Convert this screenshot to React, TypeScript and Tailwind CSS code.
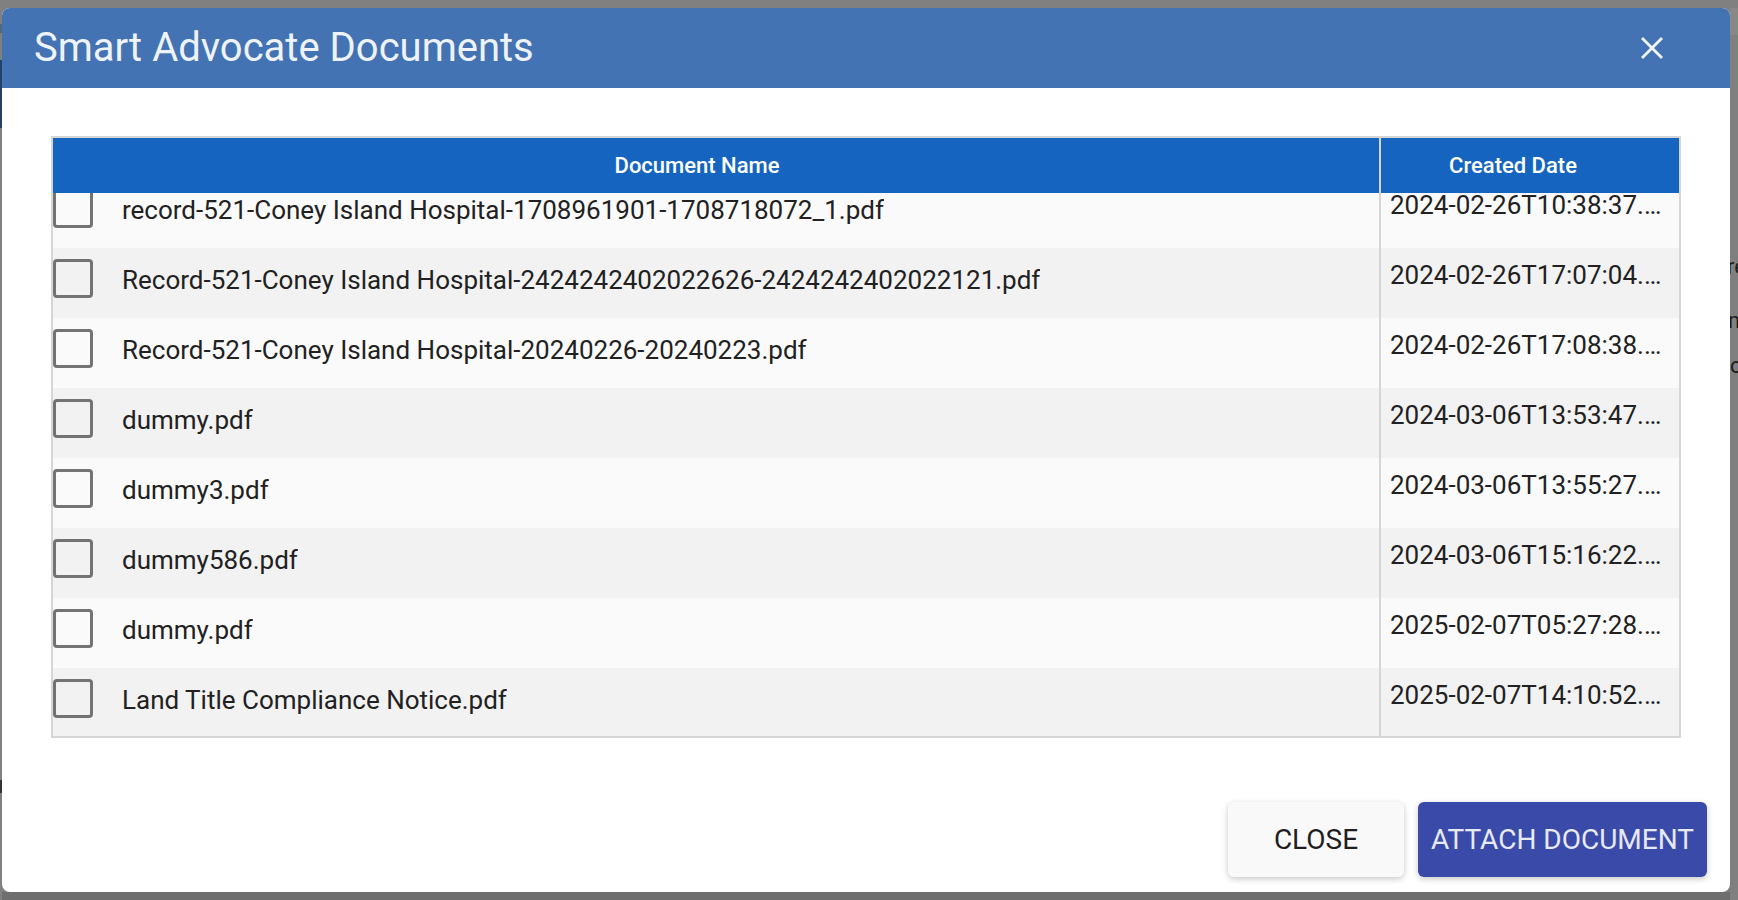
import React from 'react';

type Doc = { name: string; created: string };

const docs: Doc[] = [
  { name: 'record-521-Coney Island Hospital-1708961901-1708718072_1.pdf', created: '2024-02-26T10:38:37.…' },
  { name: 'Record-521-Coney Island Hospital-2424242402022626-2424242402022121.pdf', created: '2024-02-26T17:07:04.…' },
  { name: 'Record-521-Coney Island Hospital-20240226-20240223.pdf', created: '2024-02-26T17:08:38.…' },
  { name: 'dummy.pdf', created: '2024-03-06T13:53:47.…' },
  { name: 'dummy3.pdf', created: '2024-03-06T13:55:27.…' },
  { name: 'dummy586.pdf', created: '2024-03-06T15:16:22.…' },
  { name: 'dummy.pdf', created: '2025-02-07T05:27:28.…' },
  { name: 'Land Title Compliance Notice.pdf', created: '2025-02-07T14:10:52.…' },
];

function CloseIcon() {
  return (
    <svg width="22" height="22" viewBox="0 0 22 22" fill="none">
      <path d="M1 1L21 21M21 1L1 21" stroke="#f1f4fa" strokeWidth="2.8" />
    </svg>
  );
}

function DocRow({ doc, index }: { doc: Doc; index: number }) {
  const shade = index % 2 === 0 ? 'bg-[#fafafa]' : 'bg-[#f2f2f2]';
  return (
    <div className={`flex h-[70px] ${shade}`}>
      <div className="flex w-[1326px] flex-none items-start">
        <span className="mt-[11px] h-[39px] w-[40px] flex-none rounded-[4px] border-[3px] border-[#737373]" />
        <span className="mt-[13px] ml-[29px] truncate text-[26px] leading-[39px] text-[#212121]">{doc.name}</span>
      </div>
      <div className="w-[300px] flex-none border-l-2 border-[#d6d6d6] pt-[8px] pl-[9px] pr-[12px]">
        <div className="truncate text-[26px] leading-[39px] text-[#212121]">{doc.created}</div>
      </div>
    </div>
  );
}

export default function App() {
  return (
    <div className="flex h-[900px] w-full overflow-hidden bg-[#808080] font-['Roboto',sans-serif]">
      {/* page behind the overlay, left edge */}
      <div className="flex w-[2px] flex-none flex-col">
        <div className="mt-[24px] h-[9px] bg-[#56657c]" />
        <div className="mt-[27px] h-[68px] bg-[#24416d]" />
        <div className="mt-[652px] h-[13px] bg-[#333333]" />
      </div>

      <div className="flex flex-none flex-col">
        <section className="mt-[8px] flex h-[884px] w-[1728px] flex-col rounded-[8px] bg-white">
          <header className="flex h-[80px] flex-none items-center justify-between rounded-t-[8px] bg-[#4373b3] pl-[32px] pr-[67px]">
            <h1 className="text-[40px] font-normal leading-none text-[#eef2f9]">Smart Advocate Documents</h1>
            <button className="flex items-center justify-center">
              <CloseIcon />
            </button>
          </header>

          <div className="px-[49px] pt-[48px]">
            <div className="border-2 border-[#d6d6d6]">
              <div className="flex h-[55px] bg-[#1565c0] text-[22px] font-medium text-white">
                <div className="flex w-[1326px] flex-none items-center justify-center pr-[38px]">Document Name</div>
                <div className="flex w-[300px] flex-none items-center justify-center border-l-2 border-[#d6d6d6] pr-[34px]">
                  Created Date
                </div>
              </div>
              <div className="h-[543px] overflow-hidden">
                <div className="-mt-[15px]">
                  {docs.map((d, i) => (
                    <DocRow key={i} doc={d} index={i} />
                  ))}
                </div>
              </div>
            </div>
          </div>

          <footer className="mt-auto flex justify-end gap-[14px] pb-[15px] pr-[23px]">
            <button className="h-[75px] w-[176px] rounded-[6px] bg-[#f9f9f9] text-[28px] text-[#1f1f1f] shadow-[0_2px_6px_rgba(0,0,0,0.22)]">
              CLOSE
            </button>
            <button className="h-[75px] w-[289px] rounded-[6px] bg-[#3a4aa9] text-[28px] text-[#e6e9f6] shadow-[0_2px_6px_rgba(0,0,0,0.22)]">
              ATTACH DOCUMENT
            </button>
          </footer>
        </section>
        <div className="mt-auto h-[8px] bg-[#6e6e6e]" />
      </div>

      {/* page behind the overlay, right edge */}
      <div className="flex min-w-0 flex-1 flex-col overflow-hidden">
        <div className="mt-[8px] h-[27px] bg-[#888888]" />
        <div className="flex flex-col text-[22px] leading-[24px] text-[#1c1c1c]">
          <span className="mt-[220px] -ml-[3px]">re</span>
          <span className="mt-[30px] -ml-[2px]">m</span>
          <span className="mt-[21px]">c</span>
        </div>
      </div>
    </div>
  );
}
